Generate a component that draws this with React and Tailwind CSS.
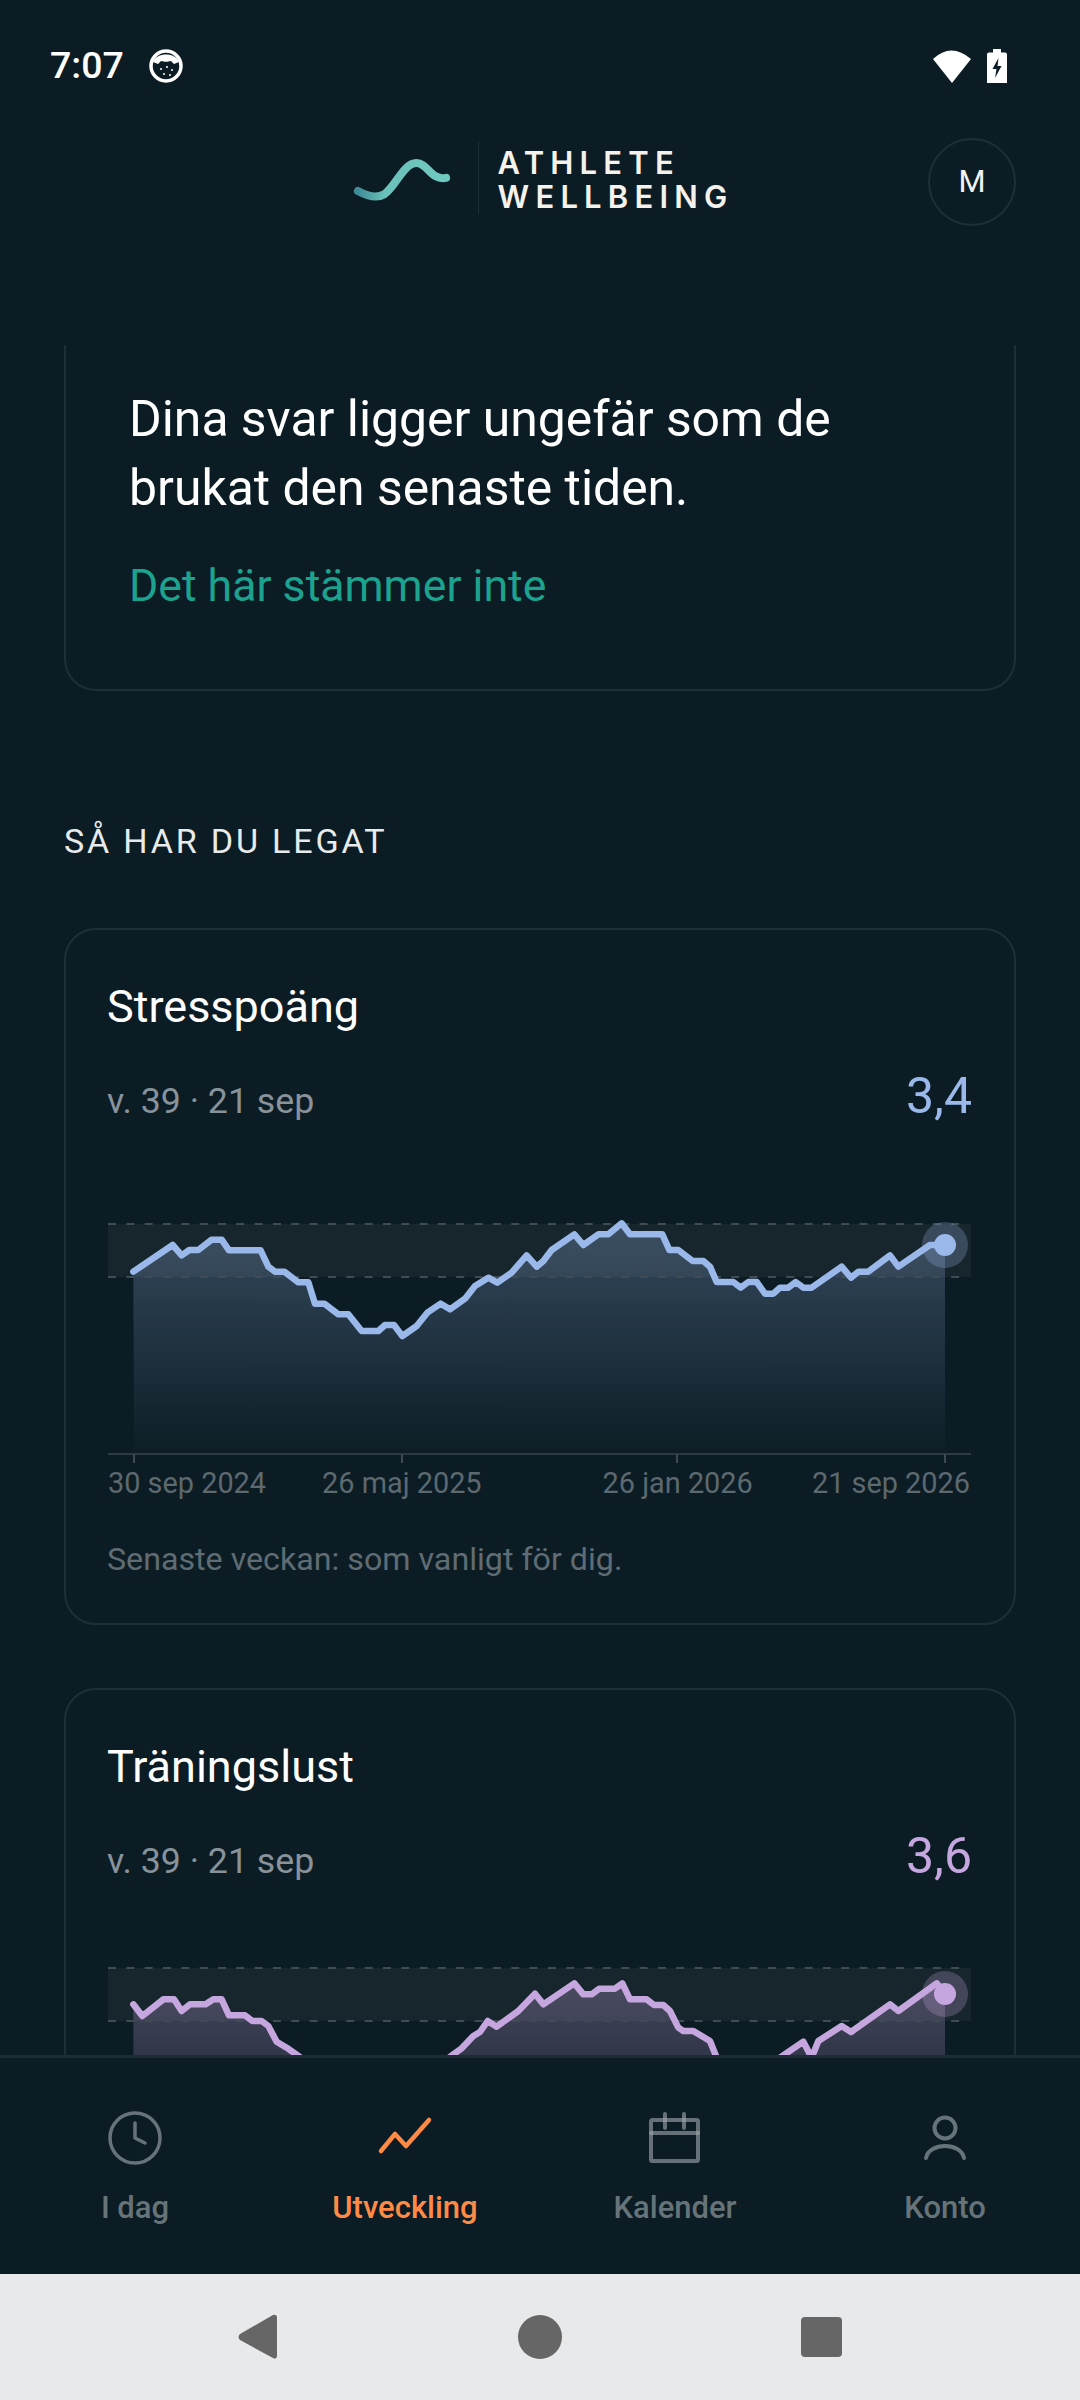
import { Clock } from "lucide-react";

// points are read off 3x crops, toLocal turns them into chart pixels
const stressPoints = [
  [130, 362], [248, 282], [275, 313], [298, 297], [325, 297], [365, 266], [395, 266], [417, 298],
  [512, 298], [535, 347], [555, 362], [583, 362], [625, 394], [655, 394], [675, 458], [703, 458],
  [745, 490], [775, 490], [815, 540], [865, 540], [885, 522], [912, 522], [937, 555], [980, 525],
  [1012, 485], [1052, 458], [1080, 475], [1125, 443], [1155, 405], [1195, 380], [1222, 395], [1265, 365],
  [1310, 313], [1340, 347], [1360, 330], [1385, 297], [1453, 250], [1480, 282], [1525, 250], [1555, 250],
  [1595, 217], [1620, 250], [1717, 250], [1738, 297], [1765, 297], [1808, 330], [1840, 330], [1860, 347],
  [1880, 393], [1930, 393], [1952, 410], [1975, 393], [2000, 393], [2025, 428], [2050, 428], [2070, 410],
  [2095, 410], [2117, 393], [2140, 410], [2165, 410], [2255, 347], [2283, 380], [2305, 362], [2335, 362],
  [2400, 313], [2425, 347], [2520, 282], [2565, 282],
];

const motivationPoints = [
  [130, 160], [157, 195], [220, 145], [252, 145], [275, 180], [300, 160], [347, 160], [370, 145],
  [395, 145], [417, 193], [465, 193], [487, 210], [515, 210], [535, 225], [560, 272], [590, 290],
  [625, 315], [700, 370], [800, 420], [950, 420], [1090, 310], [1115, 292], [1150, 255], [1170, 243],
  [1193, 210], [1220, 227], [1285, 180], [1335, 128], [1360, 160], [1453, 97], [1480, 130], [1505, 130],
  [1528, 113], [1575, 113], [1597, 97], [1620, 145], [1670, 145], [1692, 162], [1720, 162], [1740, 180],
  [1765, 230], [1780, 240], [1810, 240], [1860, 270], [1880, 320], [1910, 400], [2000, 400], [2070, 320],
  [2140, 272], [2165, 320], [2185, 270], [2255, 225], [2283, 243], [2400, 160], [2425, 180], [2540, 97],
  [2565, 130],
];

const ticks = [26, 294, 569, 837];

const StatusBar = () => (
  <div className="flex h-[132px] shrink-0 items-center justify-between pl-[50px] pr-[73px]">
    <div className="flex items-center gap-[25px]">
      <span className="text-[37.500px] leading-none font-medium text-white">7:07</span>
      <svg width="34" height="34" viewBox="0 0 34 34">
        <circle cx="17" cy="17" r="15" fill="#0c1c24" stroke="#fff" strokeWidth="3.500" />
        <path d="M4 13 C7 3 27 3 30 13 L25 15 L22 12 C18 13 16 13 12 12 L9 15 Z" fill="#fff" />
        <circle cx="12" cy="20" r="1" fill="#fff" />
        <circle cx="18" cy="18" r="1" fill="#fff" />
        <circle cx="23" cy="21" r="1" fill="#fff" />
        <circle cx="15" cy="25" r="1" fill="#fff" />
        <circle cx="21" cy="26" r="1" fill="#fff" />
      </svg>
    </div>
    <div className="flex items-center gap-[16px]">
      <svg width="38" height="33" viewBox="0 0 38 33">
        <path d="M0 9 Q18 -8 38 9 L19 33 Z" fill="#fff" />
      </svg>
      <svg width="20" height="34" viewBox="0 0 20 34">
        <path d="M6 0 H14 V3.500 H18 Q20 3.500 20 5.500 V34 H0 V5.500 Q0 3.500 2 3.500 H6 Z" fill="#fff" />
        <path d="M11.500 9 L5.500 20 H9.500 L8 29 L14.500 17 H10.500 Z" fill="#0c1c24" />
      </svg>
    </div>
  </div>
);

const Header = () => (
  <div className="grid h-[100px] shrink-0 grid-cols-[1fr_auto_1fr] items-center pr-[64px] pl-[64px]">
    <div />
    <div className="ml-[5px] flex items-center">
      <svg width="100" height="45" viewBox="90 100 310 140" className="-mt-[8px]">
        <defs>
          <linearGradient id="logoFade" x1="0" x2="1" y1="0" y2="0">
            <stop offset="0" stopColor="#3f8c98" />
            <stop offset="0.3" stopColor="#69c1b9" />
            <stop offset="1" stopColor="#70c9bf" />
          </linearGradient>
        </defs>
        <path
          d="M108 209 C135 224 165 234 190 219 C225 195 250 122 290 122 C325 122 335 177 382 168"
          fill="none"
          stroke="url(#logoFade)"
          strokeWidth="25"
          strokeLinecap="round"
        />
      </svg>
      <div className="ml-[26px] h-[72px] w-[1px] -translate-y-[4px] bg-[#1d3039]" />
      <div className="ml-[19px] -translate-y-[2px] font-['Inter',sans-serif] text-[31px] leading-[34px] font-semibold tracking-[0.2em] text-[#f5f2ec]">
        <div>ATHLETE</div>
        <div>WELLBEING</div>
      </div>
    </div>
    <div className="flex h-[88px] w-[88px] items-center justify-center justify-self-end rounded-full border-2 border-[#1f2f37] text-[31px] text-[#f1f3f3]">
      M
    </div>
  </div>
);

const Chart = ({ id, color, points, bandTop, dotY, offsetY }) => {
  const local = points.map(([x, y]) => [x / 3 - 18, y / 3 + offsetY]);
  const line = local.map(([x, y]) => `${x},${y}`).join(" ");
  const lastX = local[local.length - 1][0];
  const area = `M26,263 L${line.replaceAll(" ", " L")} L${lastX},263 Z`;

  return (
    <svg width="864" height="272" viewBox="0 0 864 272" className="mt-[65px] block">
      <defs>
        <linearGradient id={id} gradientUnits="userSpaceOnUse" x1="0" x2="0" y1="20" y2="263">
          <stop offset="0" stopColor={color} stopOpacity="0.3" />
          <stop offset="1" stopColor={color} stopOpacity="0.01" />
        </linearGradient>
      </defs>
      <rect x="0" y={bandTop} width="863" height="53" fill="#17262d" />
      <path d={area} fill={`url(#${id})`} />
      <line x1="0" x2="856" y1={bandTop} y2={bandTop} stroke="#3f4c53" strokeWidth="2" strokeDasharray="8 10.33" />
      <line x1="0" x2="856" y1={bandTop + 53} y2={bandTop + 53} stroke="#3f4c53" strokeWidth="2" strokeDasharray="8 10.33" />
      <polyline points={line} fill="none" stroke={color} strokeWidth="6.500" strokeLinejoin="round" strokeLinecap="round" />
      <circle cx="837" cy={dotY} r="23" fill={color} fillOpacity="0.25" />
      <circle cx="837" cy={dotY} r="11" fill={color} />
      <rect x="0" y="262" width="863" height="2" fill="#2c3b43" />
      {ticks.map((x) => (
        <rect key={x} x={x - 1} y="263" width="2" height="9" fill="#3c4a51" />
      ))}
    </svg>
  );
};

const AxisLabels = () => (
  <div className="mt-[2px] flex w-[862px] text-[28.875px] leading-[36px] whitespace-nowrap text-[#5c696f]">
    <span>30 sep 2024</span>
    <span className="ml-[56px]">26 maj 2025</span>
    <span className="ml-[121px]">26 jan 2026</span>
    <span className="ml-auto">21 sep 2026</span>
  </div>
);

const MetricCard = ({ title, value, valueClass, footer, ...chart }) => (
  <div className="mt-[63px] shrink-0 rounded-[32px] border-2 border-[#1f2f37] px-[42px] pt-[49px] pb-[42px]">
    <h3 className="-ml-[1px] text-[45px] leading-[56px] text-white">{title}</h3>
    <div className="mt-[31px] flex h-[60px] items-baseline justify-between">
      <span className="-ml-[1px] text-[35.700px] text-[#87929a]">v. 39 · 21 sep</span>
      <span className={`text-[50px] leading-[60px] ${valueClass}`}>{value}</span>
    </div>
    <Chart {...chart} />
    {/* the lower card runs out behind the nav, its axis and footer are never on screen */}
    {footer && (
      <>
        <AxisLabels />
        <p className="-ml-[1px] mt-[36px] text-[32.200px] leading-[44px] text-[#5f6c73]">{footer}</p>
      </>
    )}
  </div>
);

const NavItem = ({ label, active, children }) => (
  <div className="flex flex-1 flex-col items-center">
    <div className="flex h-[60px] w-[60px] items-center justify-center">{children}</div>
    <span className={`mt-[20px] text-[31px] leading-[40px] font-medium ${active ? "text-[#ff8a45]" : "text-[#667479]"}`}>
      {label}
    </span>
  </div>
);

const BottomNav = () => (
  <nav className="flex h-[219px] shrink-0 border-t-[3px] border-[#1c2d35] bg-[#0c1c24] pt-[50px]">
    <NavItem label="I dag">
      <Clock size={60} strokeWidth={1.4} color="#667479" />
    </NavItem>
    <NavItem label="Utveckling" active>
      <svg width="60" height="60" viewBox="0 0 60 60">
        <polyline points="6,43 20,26 31,38 54,12" fill="none" stroke="#ff8a45" strokeWidth="4.500" strokeLinecap="round" strokeLinejoin="round" />
      </svg>
    </NavItem>
    <NavItem label="Kalender">
      <svg width="60" height="60" viewBox="0 0 60 60" stroke="#a1aaae" strokeOpacity="0.6" strokeWidth="4" fill="none" strokeLinecap="round">
        <rect x="6" y="12" width="47" height="41" rx="1.500" />
        <line x1="6" x2="53" y1="25" y2="25" />
        <line x1="20" x2="20" y1="6" y2="20" />
        <line x1="39" x2="39" y1="6" y2="20" />
      </svg>
    </NavItem>
    <NavItem label="Konto">
      <svg width="60" height="60" viewBox="0 0 60 60" fill="none" stroke="#667479" strokeWidth="4" strokeLinecap="round">
        <circle cx="30" cy="20" r="10.500" />
        <path d="M11 50 C14 34 46 34 49 50" />
      </svg>
    </NavItem>
  </nav>
);

const SystemNav = () => (
  <div className="flex h-[126px] shrink-0 items-center justify-center bg-[#e8e9eb]">
    <svg width="410" height="46" viewBox="0 0 410 46" className="-ml-[2px]">
      <path d="M36 1 Q40 0 40 4 V41 Q40 46 36 44 L3 26 Q0 23 3 20 Z" fill="#666" />
      <circle cx="303" cy="23" r="22" fill="#666" />
    </svg>
    <div className="ml-[154px] h-[40px] w-[41px] rounded-[4px] bg-[#666]" />
  </div>
);

export default function App() {
  return (
    <div className="flex h-[2400px] w-[1080px] flex-col overflow-hidden bg-[#0c1c24] font-['Roboto',sans-serif]">
      <StatusBar />
      <Header />
      <main className="mt-[113px] flex min-h-0 flex-1 flex-col overflow-hidden px-[64px]">
        <section className="shrink-0 rounded-b-[32px] border-x-2 border-b-2 border-[#1f2f37] pt-[40px] pr-[110px] pb-[75px] pl-[63px]">
          <p className="text-[49.875px] leading-[69px] text-white">
            Dina svar ligger ungefär som de brukat den senaste tiden.
          </p>
          <p className="mt-[35px] text-[44.625px] leading-[56px] text-[#1ba38f]">Det här stämmer inte</p>
        </section>
        <h2 className="mt-[127px] shrink-0 text-[34.100px] leading-[47px] tracking-[2.800px] text-[#e8ebec]">
          SÅ HAR DU LEGAT
        </h2>
        <div className="flex flex-col">
          <MetricCard
            title="Stresspoäng"
            value="3,4"
            valueClass="text-[#9ab8ea]"
            footer="Senaste veckan: som vanligt för dig."
            id="stressFill"
            color="#9ab8ea"
            points={stressPoints}
            bandTop={33}
            dotY={54}
            offsetY={-40}
          />
          <MetricCard
            title="Träningslust"
            value="3,6"
            valueClass="text-[#c6a6df]"
            id="motivationFill"
            color="#c6a6df"
            points={motivationPoints}
            bandTop={17}
            dotY={43}
            offsetY={0}
          />
        </div>
      </main>
      <BottomNav />
      <SystemNav />
    </div>
  );
}
